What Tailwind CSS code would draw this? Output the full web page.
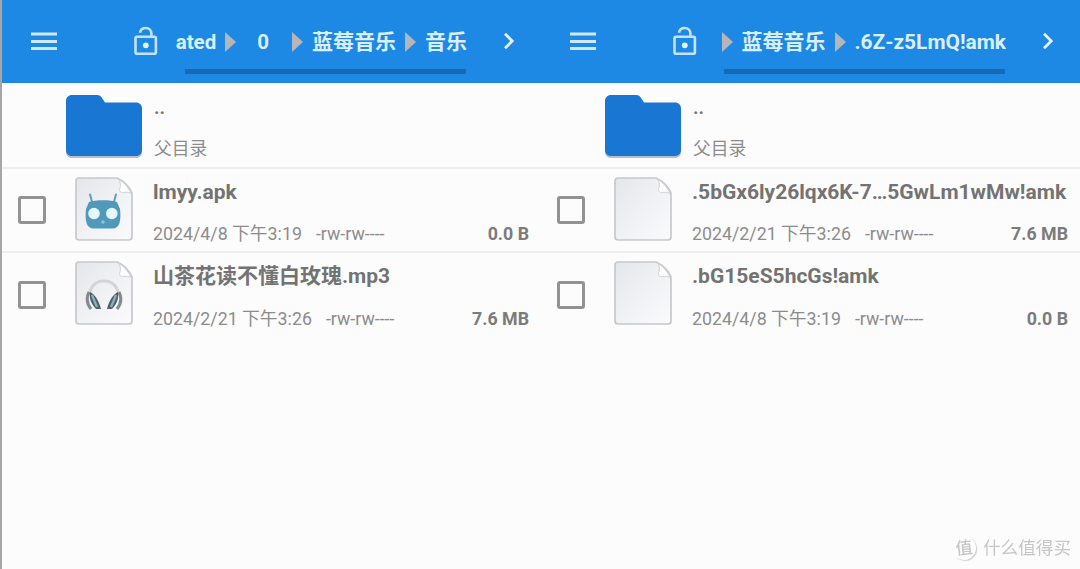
<!DOCTYPE html>
<html lang="zh-CN">
<head>
  <meta charset="UTF-8">
  <meta name="viewport" content="width=device-width, initial-scale=1.0">
  <title>文件管理器</title>
  <script src="https://cdn.jsdelivr.net/npm/@tailwindcss/browser@4"></script>
</head>
<body class="h-screen overflow-hidden bg-[#fcfcfc] font-[Roboto,'Noto_Sans_CJK_SC',sans-serif] text-[#737373]">

  <!-- Icons -->
  <svg class="absolute size-0">
    <defs>
      <linearGradient id="paper" x1="0" y1="0" x2="1" y2="1">
        <stop offset="0" stop-color="#e4e7ea" />
        <stop offset="1" stop-color="#fbfbfd" />
      </linearGradient>
      <symbol id="menu" viewBox="0 0 26 20">
        <path d="M0 3h26M0 10.500h26M0 17.500h26" stroke="#cfe9f9" stroke-width="2.800" />
      </symbol>
      <symbol id="lock" viewBox="0 0 24 30">
        <rect x="1.5" y="10.8" width="20.4" height="16.9" rx="1.5" fill="none" stroke="#c4e3f8" stroke-width="2.6" />
        <path d="M6 6.8C6.5 3.8 8.5 2 11.6 2c3.6 0 5.8 2.4 5.8 5.6v3" fill="none" stroke="#c4e3f8" stroke-width="2.6" />
        <circle cx="11.8" cy="19.3" r="2.9" fill="#e2f4fd" />
      </symbol>
      <symbol id="arrow" viewBox="0 0 11 20">
        <path d="M0 0l11 10L0 20z" fill="#b5b5ba" />
      </symbol>
      <symbol id="chevron" viewBox="0 0 12 18">
        <path d="M2 1.8l7.2 7.2L2 16.2" fill="none" stroke="#e3f3fc" stroke-width="2.8" />
      </symbol>
      <symbol id="folder" viewBox="0 0 76 63">
        <path d="M6 2h25c2 0 3.500.8 4.500 2.200L39 9h31c3.500 0 6 2.500 6 6v42c0 3.500-2.500 6-6 6H6c-3.500 0-6-2.500-6-6V8c0-3.500 2.500-6 6-6z" fill="#b9bec4" />
        <path d="M6 0h25c2 0 3.500.8 4.500 2.200L39 7.500h31c3.500 0 6 2.500 6 6V55c0 3.500-2.500 6-6 6H6c-3.500 0-6-2.500-6-6V6c0-3.500 2.500-6 6-6z" fill="#1976d2" />
      </symbol>
      <symbol id="file" viewBox="0 0 58 64">
        <path d="M4 1h38c7 3 12 8 15 15v44c0 1.700-1.300 3-3 3H4c-1.700 0-3-1.300-3-3V4c0-1.700 1.300-3 3-3z" fill="url(#paper)" stroke="#c6c8ca" stroke-width="1.7" />
        <path d="M44 2.500c2 4 1.500 7 .5 10 0 2 1 3 3 3 3.500-.5 6-.3 8.500.8C53 10 49 5.500 44 2.500z" fill="#fff" stroke="#d0d2d4" stroke-width="1" />
      </symbol>
      <symbol id="robot" viewBox="0 0 36 38">
        <path d="M5 1.500l2.500 9M31 1.500l-2.500 9" stroke="#5a9fbe" stroke-width="2" stroke-linecap="round" />
        <path d="M4 9c6-2.500 22-2.500 28 0l3 7c.6 5 .6 10-.5 14-1 3.500-3.500 5.500-7 5.500h-19c-3.500 0-6-2-7-5.500-1.100-4-1.100-9-.5-14z" fill="#5099bb" />
        <circle cx="9" cy="20.500" r="5.800" fill="#e5f6fc" />
        <circle cx="26.800" cy="20.500" r="5.800" fill="#e5f6fc" />
        <circle cx="18" cy="29" r="1.800" fill="#8cc5da" />
      </symbol>
      <symbol id="headphones" viewBox="0 0 38 32">
        <path d="M4 16C6 6 11 2 19 2s13 4 15 14" fill="none" stroke="#d2d4d5" stroke-width="3" />
        <path d="M4 13c-3 6-2 12 2 17M34 13c3 6 2 12-2 17" fill="none" stroke="#85898c" stroke-width="3" />
        <path d="M5 13c5 2 9 9 11 17h-5C6 25 4 19 5 13zM33 13c-5 2-9 9-11 17h5c5-5 7-11 6-17z" fill="#536269" />
        <path d="M7 16l5 12M31 16l-5 12" stroke="#82b4c2" stroke-width="2.200" />
      </symbol>
    </defs>
  </svg>

  <div class="flex h-full border-l-2 border-[#a6a6a6]">

    <!-- Left pane -->
    <section class="w-[539px] shrink-0">
      <header class="flex h-[83px] items-start bg-[#1e88e5]">
        <svg class="ml-[29px] mt-[31px] h-5 w-[26px]"><use href="#menu" /></svg>
        <svg class="ml-[77px] mt-[26px] h-[30px] w-6"><use href="#lock" /></svg>
        <div class="ml-[18px] w-[291px]">
          <div class="flex h-[69px] items-center justify-end overflow-hidden whitespace-nowrap pt-[15px] text-[21px] leading-[30px] font-bold text-[#d9f0fb]">
            <span class="text-[20.5px]">ated</span>
            <svg class="ml-[9px] h-5 w-[11px] shrink-0"><use href="#arrow" /></svg>
            <span class="ml-[21px] text-[20.5px]">0</span>
            <svg class="ml-[23px] h-5 w-[11px] shrink-0"><use href="#arrow" /></svg>
            <span class="ml-[9px]">蓝莓音乐</span>
            <svg class="ml-[9px] h-5 w-[11px] shrink-0"><use href="#arrow" /></svg>
            <span class="ml-[9px]">音乐</span>
          </div>
          <div class="ml-[9px] h-[5px] w-[281px] bg-[#1769b4]"></div>
        </div>
        <svg class="ml-9 mt-8 h-[18px] w-3"><use href="#chevron" /></svg>
      </header>

      <ul>
        <li class="flex h-[86px] border-b-2 border-[#eeeeee] pl-16">
          <svg class="mt-3 h-[63px] w-[76px]"><use href="#folder" /></svg>
          <div class="ml-3">
            <p class="mt-[11px] h-7 text-[19px] leading-7 font-bold">..</p>
            <p class="mt-[13px] text-[17.8px] leading-7 text-[#8c8c8c]">父目录</p>
          </div>
        </li>
        <li class="flex h-[84px] border-b-2 border-[#eeeeee] pl-4">
          <span class="mt-[27px] size-7 rounded-[3px] border-3 border-[#929292]"></span>
          <div class="relative ml-[29px] mt-2 h-16 w-[58px]">
            <svg class="size-full"><use href="#file" /></svg>
            <svg class="absolute top-[16px] left-[10px] h-[38px] w-9"><use href="#robot" /></svg>
          </div>
          <div class="ml-5 w-[376px]">
            <p class="mt-[9px] text-[21px] leading-7 font-bold">lmyy.apk</p>
            <div class="mt-[14px] flex text-[17.8px] leading-7 text-[#8c8c8c]">
              <span>2024/4/8 下午3:19</span>
              <span class="ml-[14px]">-rw-rw----</span>
              <span class="ml-auto font-bold text-[#7b7b7b]">0.0 B</span>
            </div>
          </div>
        </li>
        <li class="flex h-[85px] pl-4">
          <span class="mt-7 size-7 rounded-[3px] border-3 border-[#929292]"></span>
          <div class="relative ml-[29px] mt-2 h-16 w-[58px]">
            <svg class="size-full"><use href="#file" /></svg>
            <svg class="absolute top-[18px] left-[10px] h-8 w-[38px]"><use href="#headphones" /></svg>
          </div>
          <div class="ml-5 w-[376px]">
            <p class="mt-[9px] text-[21px] leading-7 font-bold">山茶花读不懂白玫瑰.mp3</p>
            <div class="mt-[15px] flex text-[17.8px] leading-7 text-[#8c8c8c]">
              <span>2024/2/21 下午3:26</span>
              <span class="ml-[14px]">-rw-rw----</span>
              <span class="ml-auto font-bold text-[#7b7b7b]">7.6 MB</span>
            </div>
          </div>
        </li>
      </ul>
    </section>

    <!-- Right pane -->
    <section class="w-[539px] shrink-0">
      <header class="flex h-[83px] items-start bg-[#1e88e5]">
        <svg class="ml-[29px] mt-[31px] h-5 w-[26px]"><use href="#menu" /></svg>
        <svg class="ml-[77px] mt-[26px] h-[30px] w-6"><use href="#lock" /></svg>
        <div class="ml-[18px] w-[291px]">
          <div class="flex h-[69px] items-center justify-end overflow-hidden whitespace-nowrap pt-[15px] text-[21px] leading-[30px] font-bold text-[#d9f0fb]">
            <svg class="h-5 w-[11px] shrink-0"><use href="#arrow" /></svg>
            <span class="ml-[9px]">蓝莓音乐</span>
            <svg class="ml-[9px] h-5 w-[11px] shrink-0"><use href="#arrow" /></svg>
            <span class="ml-[9px] text-[20.900px]">.6Z-z5LmQ!amk</span>
          </div>
          <div class="ml-[9px] h-[5px] w-[281px] bg-[#1769b4]"></div>
        </div>
        <svg class="ml-9 mt-8 h-[18px] w-3"><use href="#chevron" /></svg>
      </header>

      <ul>
        <li class="flex h-[86px] border-b-2 border-[#eeeeee] pl-16">
          <svg class="mt-3 h-[63px] w-[76px]"><use href="#folder" /></svg>
          <div class="ml-3">
            <p class="mt-[11px] h-7 text-[19px] leading-7 font-bold">..</p>
            <p class="mt-[13px] text-[17.8px] leading-7 text-[#8c8c8c]">父目录</p>
          </div>
        </li>
        <li class="flex h-[84px] border-b-2 border-[#eeeeee] pl-4">
          <span class="mt-[27px] size-7 rounded-[3px] border-3 border-[#929292]"></span>
          <svg class="ml-[29px] mt-2 h-16 w-[58px]"><use href="#file" /></svg>
          <div class="ml-5 w-[376px]">
            <p class="mt-[9px] whitespace-nowrap text-[21px] leading-7 font-bold">.5bGx6ly26lqx6K-7…5GwLm1wMw!amk</p>
            <div class="mt-[14px] flex text-[17.8px] leading-7 text-[#8c8c8c]">
              <span>2024/2/21 下午3:26</span>
              <span class="ml-[14px]">-rw-rw----</span>
              <span class="ml-auto font-bold text-[#7b7b7b]">7.6 MB</span>
            </div>
          </div>
        </li>
        <li class="flex h-[85px] pl-4">
          <span class="mt-7 size-7 rounded-[3px] border-3 border-[#929292]"></span>
          <svg class="ml-[29px] mt-2 h-16 w-[58px]"><use href="#file" /></svg>
          <div class="ml-5 w-[376px]">
            <p class="mt-[9px] text-[21px] leading-7 font-bold">.bG15eS5hcGs!amk</p>
            <div class="mt-[15px] flex text-[17.8px] leading-7 text-[#8c8c8c]">
              <span>2024/4/8 下午3:19</span>
              <span class="ml-[14px]">-rw-rw----</span>
              <span class="ml-auto font-bold text-[#7b7b7b]">0.0 B</span>
            </div>
          </div>
        </li>
      </ul>
    </section>
  </div>

  <!-- Watermark -->
  <div class="fixed right-[9px] bottom-[9px] flex items-center gap-[7px] text-[#c6c6c6]">
    <span class="flex size-6 -rotate-6 items-center justify-center rounded-full bg-white text-[17px] leading-none font-medium shadow-[1px_1px_1px_#cfcfcf]">值</span>
    <span class="text-[17.600px] leading-6 [text-shadow:-1px_-1px_0_#fff]">什么值得买</span>
  </div>

</body>
</html>
